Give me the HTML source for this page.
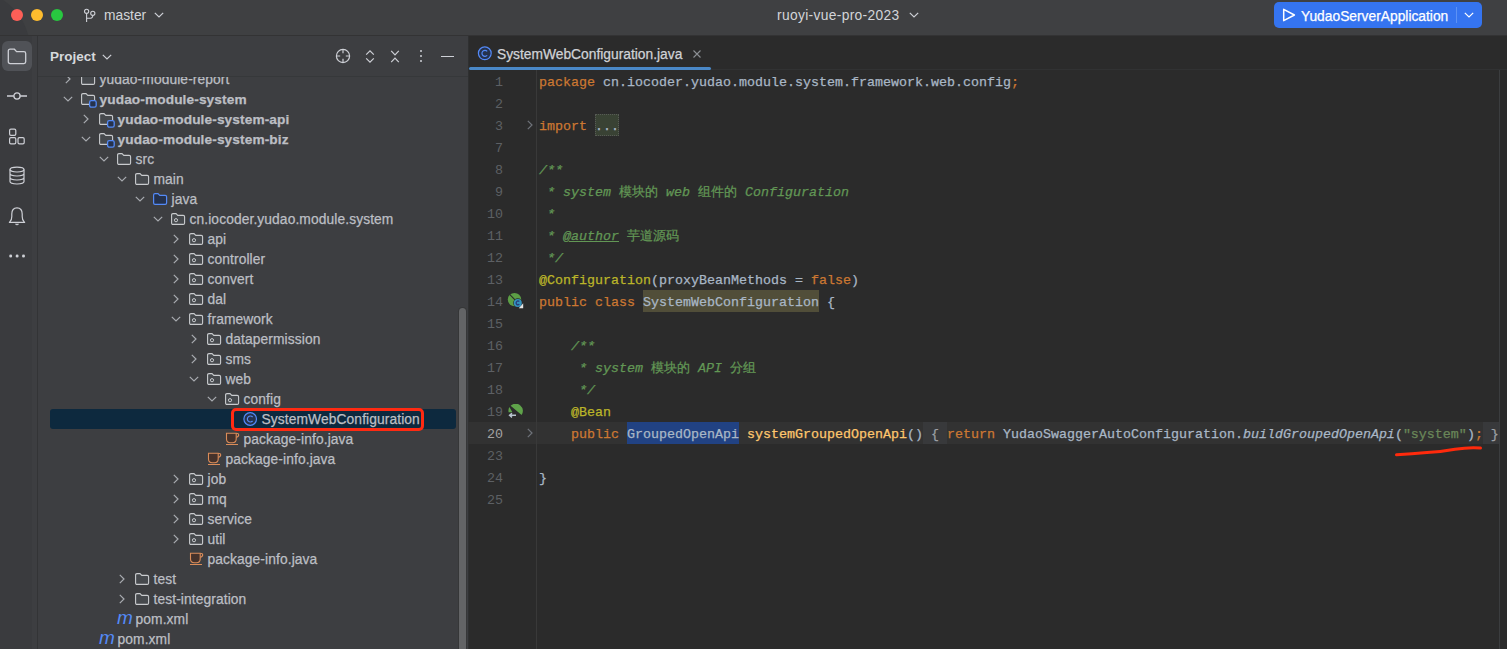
<!DOCTYPE html>
<html><head><meta charset="utf-8">
<style>
*{margin:0;padding:0;box-sizing:border-box}
html,body{width:1507px;height:649px;overflow:hidden;background:#2b2b2b}
body{position:relative;font-family:"Liberation Sans",sans-serif}
.abs{position:absolute}
.ui{-webkit-text-stroke:0.25px}
#title{left:0;top:0;width:1507px;height:35px;background:#3f4042}
#tline{left:0;top:35px;width:1507px;height:1px;background:#333334}
#strip{left:0;top:36px;width:37px;height:613px;background:#3a3b3e}
#strip2{left:32px;top:36px;width:5px;height:613px;background:#3d3e41}
#sline{left:37px;top:36px;width:1px;height:613px;background:#333436}
#panel{left:38px;top:36px;width:430px;height:613px;background:#3d3e41}
#phline{left:38px;top:76px;width:430px;height:1px;background:#36383a}
#pline{left:468px;top:36px;width:1px;height:613px;background:#2f3031}
#editor{left:468px;top:36px;width:1039px;height:613px;background:#2b2b2b}
#treeclip{left:38px;top:77px;width:429px;height:572px;overflow:hidden}
#treein{position:absolute;left:-38px;top:-77px;width:1507px;height:649px}
.row{position:absolute;height:20px;line-height:20px;font-size:13.8px;color:#bcbec4;white-space:nowrap;letter-spacing:0.1px;-webkit-text-stroke:0.25px #bcbec4}
.code{position:absolute;left:539px;font-family:"Liberation Mono",monospace;font-size:13.33px;color:#a9b7c6;white-space:pre;height:22px;line-height:22px;-webkit-text-stroke:0.25px}
.ln{position:absolute;left:470px;width:33px;text-align:right;font-family:"Liberation Mono",monospace;font-size:13.33px;color:#5d6064;height:22px;line-height:22px}
.ln.cur{color:#a4a3a3}
.kw{color:#cc7832}.cm{color:#629755;font-style:italic}.an{color:#bbb529}.fn{color:#ffc66d}.st{color:#6a8759}
.tag{font-weight:normal;text-decoration:underline}.cjk{font-style:normal}
.bgx{position:absolute;height:22px}
.fb{color:#9da0a5}
#curline{left:468px;top:422px;width:1031px;height:22px;background:#323232}
#gutline{left:536px;top:70px;width:1px;height:579px;background:#393939}
#rline{left:1499px;top:70px;width:1px;height:579px;background:#3b3d3f}
</style></head><body>
<div class="abs" id="title"></div>
<div class="abs" style="left:0;top:0;width:37px;height:35px;overflow:hidden"><div class="abs" style="left:-90px;top:-10px;width:120px;height:120px;border-radius:50%;background:#3a3b3e"></div></div>
<div class="abs" id="tline"></div>
<div class="abs" id="strip"></div>
<div class="abs" id="strip2"></div>
<div class="abs" id="sline"></div>
<div class="abs" id="panel"></div>
<div class="abs" id="phline"></div>
<div class="abs" id="editor"></div>
<div class="abs" id="pline"></div>
<div class="abs" id="curline"></div>
<div class="abs" id="gutline"></div>
<div class="abs" id="rline"></div>
<div class="abs" style="left:711px;top:69px;width:796px;height:1px;background:#313233"></div>
<div class="bgx" style="left:643px;top:290px;width:176px;background:#514e39"></div>
<div class="bgx" style="left:627px;top:422px;width:112px;background:#214283"></div>
<div class="bgx" style="left:923px;top:422px;width:24px;background:#38393b"></div>
<div class="bgx" style="left:1483px;top:422px;width:16px;background:#38393b"></div>
<div class="bgx" style="left:595px;top:114px;width:24px;background:#394234;border:1px dotted #575a55"></div>

<!-- traffic lights -->
<div class="abs" style="left:11.3px;top:9px;width:12px;height:12px;border-radius:50%;background:#fe5f57"></div>
<div class="abs" style="left:31.3px;top:9px;width:12px;height:12px;border-radius:50%;background:#febc2e"></div>
<div class="abs" style="left:51.3px;top:9px;width:12px;height:12px;border-radius:50%;background:#28c840"></div>
<!-- branch icon -->
<svg class="abs" style="left:82px;top:6px" width="16" height="18" viewBox="0 0 16 18">
 <circle cx="4.6" cy="5.3" r="2.1" fill="none" stroke="#ced0d6" stroke-width="1.1"/>
 <circle cx="10.8" cy="7.3" r="2.1" fill="none" stroke="#ced0d6" stroke-width="1.1"/>
 <path d="M4.6 7.4 V16" fill="none" stroke="#ced0d6" stroke-width="1.1"/>
 <path d="M10.8 9.4 Q10.8 12.3 7.5 12.3 H4.6" fill="none" stroke="#ced0d6" stroke-width="1.1"/>
</svg>
<div class="abs" style="left:104px;top:6px;font-size:13.8px;line-height:20px;color:#d3d5d9">master</div>
<svg class="abs" style="left:154px;top:11.0px" width="10" height="8" viewBox="0 0 10 8"><path d="M0.8 1.8 L5 6 L9.2 1.8" fill="none" stroke="#ced0d6" stroke-width="1.2"/></svg>
<div class="abs" style="left:777px;top:6px;font-size:13.8px;letter-spacing:0.33px;line-height:20px;color:#d3d5d9">ruoyi-vue-pro-2023</div>
<svg class="abs" style="left:909px;top:11.0px" width="10" height="8" viewBox="0 0 10 8"><path d="M0.8 1.8 L5 6 L9.2 1.8" fill="none" stroke="#ced0d6" stroke-width="1.2"/></svg>
<!-- run button -->
<div class="abs" style="left:1274px;top:2px;width:208px;height:26px;border-radius:5px;background:#3574f0"></div>
<svg class="abs" style="left:1281px;top:7px" width="16" height="16" viewBox="0 0 16 16"><path d="M2.7 2.3 L13.4 8 L2.7 13.7 Z" fill="none" stroke="#ffffff" stroke-width="1.5" stroke-linejoin="round"/></svg>
<div class="abs ui" style="left:1301px;top:6.5px;font-size:13.8px;line-height:20px;color:#ffffff">YudaoServerApplication</div>
<div class="abs" style="left:1456px;top:7px;width:1px;height:16px;background:#5d92f5"></div>
<svg class="abs" style="left:1463.5px;top:11.0px" width="10" height="8" viewBox="0 0 10 8"><path d="M0.8 1.8 L5 6 L9.2 1.8" fill="none" stroke="#ffffff" stroke-width="1.2"/></svg>

<!-- left strip -->
<div class="abs" style="left:2px;top:41px;width:30px;height:30px;border-radius:6px;background:#505257"></div>
<svg class="abs" style="left:7px;top:48px" width="20" height="17" viewBox="0 0 20 17"><path d="M1.3 3 Q1.3 1.2 3.1 1.2 H7.4 L9.6 3.6 H16.9 Q18.7 3.6 18.7 5.4 V13.8 Q18.7 15.6 16.9 15.6 H3.1 Q1.3 15.6 1.3 13.8 Z" fill="none" stroke="#ced0d6" stroke-width="1.3"/></svg>
<svg class="abs" style="left:6px;top:90px" width="22" height="12" viewBox="0 0 22 12"><circle cx="11" cy="6" r="3.1" fill="none" stroke="#ced0d6" stroke-width="1.3"/><path d="M1 6 H7.9 M14.1 6 H21" stroke="#ced0d6" stroke-width="1.3"/></svg>
<svg class="abs" style="left:8px;top:128px" width="18" height="18" viewBox="0 0 18 18"><rect x="1.6" y="1.2" width="6.2" height="6.2" rx="1.3" fill="none" stroke="#ced0d6" stroke-width="1.2"/><rect x="1.6" y="9.6" width="6.2" height="6.2" rx="1.3" fill="none" stroke="#ced0d6" stroke-width="1.2"/><rect x="10" y="9.6" width="6.2" height="6.2" rx="1.3" fill="none" stroke="#ced0d6" stroke-width="1.2"/></svg>
<svg class="abs" style="left:8px;top:166px" width="18" height="20" viewBox="0 0 18 20"><ellipse cx="9" cy="3.6" rx="7" ry="2.4" fill="none" stroke="#ced0d6" stroke-width="1.2"/><path d="M2 3.6 V15.6 Q2 18 9 18 Q16 18 16 15.6 V3.6 M2 7.6 Q2 10 9 10 Q16 10 16 7.6 M2 11.6 Q2 14 9 14 Q16 14 16 11.6" fill="none" stroke="#ced0d6" stroke-width="1.2"/></svg>
<svg class="abs" style="left:8px;top:206px" width="18" height="20" viewBox="0 0 18 20"><path d="M1.4 16.4 H16.6 L16 15.6 Q14.2 13.8 14.2 10.5 V8 Q14.2 1.8 9 1.8 Q3.8 1.8 3.8 8 V10.5 Q3.8 13.8 2 15.6 Z" fill="none" stroke="#ced0d6" stroke-width="1.2" stroke-linejoin="round"/><path d="M7.5 18.2 Q9 19.6 10.5 18.2 Z" fill="#ced0d6" stroke="#ced0d6" stroke-width="0.8"/></svg>
<svg class="abs" style="left:0;top:250px" width="36" height="12" viewBox="0 0 36 12"><circle cx="10.7" cy="6.1" r="1.5" fill="#ced0d6"/><circle cx="17.1" cy="6.1" r="1.5" fill="#ced0d6"/><circle cx="23.5" cy="6.1" r="1.5" fill="#ced0d6"/></svg>

<!-- panel header -->
<div class="abs" style="left:50px;top:47px;font-size:13.5px;line-height:20px;font-weight:bold;color:#d6d8dc">Project</div>
<svg class="abs" style="left:102px;top:52.5px" width="10" height="8" viewBox="0 0 10 8"><path d="M0.8 1.8 L5 6 L9.2 1.8" fill="none" stroke="#ced0d6" stroke-width="1.2"/></svg>
<svg class="abs" style="left:334px;top:47px" width="18" height="18" viewBox="0 0 18 18"><circle cx="9" cy="9" r="6.6" fill="none" stroke="#ced0d6" stroke-width="1.2"/><path d="M9 2.4 V6.2 M9 11.8 V15.6 M2.4 9 H6.2 M11.8 9 H15.6" stroke="#ced0d6" stroke-width="1.2"/></svg>
<svg class="abs" style="left:364.5px;top:48.8px" width="10" height="15" viewBox="0 0 10 15"><path d="M1.2 5.6 L5 1.8 L8.8 5.6 M1.2 9.4 L5 13.2 L8.8 9.4" fill="none" stroke="#ced0d6" stroke-width="1.2"/></svg>
<svg class="abs" style="left:390px;top:48.6px" width="10" height="15" viewBox="0 0 10 15"><path d="M1.2 1.8 L5 5.8 L8.8 1.8 M1.2 13.2 L5 9.2 L8.8 13.2" fill="none" stroke="#ced0d6" stroke-width="1.2"/></svg>
<div class="abs" style="left:420px;top:50px;width:2.2px;height:2.2px;border-radius:50%;background:#ced0d6"></div>
<div class="abs" style="left:420px;top:55px;width:2.2px;height:2.2px;border-radius:50%;background:#ced0d6"></div>
<div class="abs" style="left:420px;top:60px;width:2.2px;height:2.2px;border-radius:50%;background:#ced0d6"></div>
<div class="abs" style="left:440.5px;top:55.5px;width:13px;height:1.2px;background:#ced0d6"></div>

<div class="abs" id="treeclip"><div id="treein">
<div class="abs" style="left:50px;top:409px;width:406px;height:20px;border-radius:3px;background:#0d293e"></div>
<svg class="abs" style="left:63.5px;top:74px" width="8" height="10" viewBox="0 0 8 10"><path d="M1.8 0.8 L6 5 L1.8 9.2" fill="none" stroke="#a8abb0" stroke-width="1.2"/></svg>
<svg class="abs" style="left:81px;top:73px" width="16" height="16" viewBox="0 0 16 16"><path d="M0.6 2 Q0.6 0.6 2 0.6 H5 L6.8 2.4 H12.2 Q13.6 2.4 13.6 3.8 V10 Q13.6 11.4 12.2 11.4 H2 Q0.6 11.4 0.6 10 Z" fill="#46494d" stroke="#c9cbce" stroke-width="1.1"/></svg>
<div class="row" style="left:99.5px;top:70px;font-weight:normal;font-size:13.8px">yudao-module-report</div>
<svg class="abs" style="left:62.5px;top:94.5px" width="10" height="8" viewBox="0 0 10 8"><path d="M0.8 1.8 L5 6 L9.2 1.8" fill="none" stroke="#a8abb0" stroke-width="1.2"/></svg>
<svg class="abs" style="left:81px;top:93px" width="16" height="16" viewBox="0 0 16 16"><path d="M0.6 2 Q0.6 0.6 2 0.6 H5 L6.8 2.4 H12.2 Q13.6 2.4 13.6 3.8 V10 Q13.6 11.4 12.2 11.4 H2 Q0.6 11.4 0.6 10 Z" fill="#46494d" stroke="#c9cbce" stroke-width="1.1"/><rect x="8.6" y="7.6" width="6.6" height="6.6" rx="1.7" fill="#25324d" stroke="#548af7" stroke-width="1.3"/></svg>
<div class="row" style="left:99.5px;top:90px;font-weight:bold;font-size:13.7px">yudao-module-system</div>
<svg class="abs" style="left:81.5px;top:114px" width="8" height="10" viewBox="0 0 8 10"><path d="M1.8 0.8 L6 5 L1.8 9.2" fill="none" stroke="#a8abb0" stroke-width="1.2"/></svg>
<svg class="abs" style="left:99px;top:113px" width="16" height="16" viewBox="0 0 16 16"><path d="M0.6 2 Q0.6 0.6 2 0.6 H5 L6.8 2.4 H12.2 Q13.6 2.4 13.6 3.8 V10 Q13.6 11.4 12.2 11.4 H2 Q0.6 11.4 0.6 10 Z" fill="#46494d" stroke="#c9cbce" stroke-width="1.1"/><rect x="8.6" y="7.6" width="6.6" height="6.6" rx="1.7" fill="#25324d" stroke="#548af7" stroke-width="1.3"/></svg>
<div class="row" style="left:117.5px;top:110px;font-weight:bold;font-size:13.7px">yudao-module-system-api</div>
<svg class="abs" style="left:80.5px;top:134.5px" width="10" height="8" viewBox="0 0 10 8"><path d="M0.8 1.8 L5 6 L9.2 1.8" fill="none" stroke="#a8abb0" stroke-width="1.2"/></svg>
<svg class="abs" style="left:99px;top:133px" width="16" height="16" viewBox="0 0 16 16"><path d="M0.6 2 Q0.6 0.6 2 0.6 H5 L6.8 2.4 H12.2 Q13.6 2.4 13.6 3.8 V10 Q13.6 11.4 12.2 11.4 H2 Q0.6 11.4 0.6 10 Z" fill="#46494d" stroke="#c9cbce" stroke-width="1.1"/><rect x="8.6" y="7.6" width="6.6" height="6.6" rx="1.7" fill="#25324d" stroke="#548af7" stroke-width="1.3"/></svg>
<div class="row" style="left:117.5px;top:130px;font-weight:bold;font-size:13.7px">yudao-module-system-biz</div>
<svg class="abs" style="left:98.5px;top:154.5px" width="10" height="8" viewBox="0 0 10 8"><path d="M0.8 1.8 L5 6 L9.2 1.8" fill="none" stroke="#a8abb0" stroke-width="1.2"/></svg>
<svg class="abs" style="left:117px;top:153px" width="16" height="16" viewBox="0 0 16 16"><path d="M0.6 2 Q0.6 0.6 2 0.6 H5 L6.8 2.4 H12.2 Q13.6 2.4 13.6 3.8 V10 Q13.6 11.4 12.2 11.4 H2 Q0.6 11.4 0.6 10 Z" fill="#46494d" stroke="#c9cbce" stroke-width="1.1"/></svg>
<div class="row" style="left:135.5px;top:150px;font-weight:normal;font-size:13.8px">src</div>
<svg class="abs" style="left:116.5px;top:174.5px" width="10" height="8" viewBox="0 0 10 8"><path d="M0.8 1.8 L5 6 L9.2 1.8" fill="none" stroke="#a8abb0" stroke-width="1.2"/></svg>
<svg class="abs" style="left:135px;top:173px" width="16" height="16" viewBox="0 0 16 16"><path d="M0.6 2 Q0.6 0.6 2 0.6 H5 L6.8 2.4 H12.2 Q13.6 2.4 13.6 3.8 V10 Q13.6 11.4 12.2 11.4 H2 Q0.6 11.4 0.6 10 Z" fill="#46494d" stroke="#c9cbce" stroke-width="1.1"/></svg>
<div class="row" style="left:153.5px;top:170px;font-weight:normal;font-size:13.8px">main</div>
<svg class="abs" style="left:134.5px;top:194.5px" width="10" height="8" viewBox="0 0 10 8"><path d="M0.8 1.8 L5 6 L9.2 1.8" fill="none" stroke="#a8abb0" stroke-width="1.2"/></svg>
<svg class="abs" style="left:153px;top:193px" width="16" height="16" viewBox="0 0 16 16"><path d="M0.6 2 Q0.6 0.6 2 0.6 H5 L6.8 2.4 H12.2 Q13.6 2.4 13.6 3.8 V10 Q13.6 11.4 12.2 11.4 H2 Q0.6 11.4 0.6 10 Z" fill="#25324d" stroke="#548af7" stroke-width="1.2"/></svg>
<div class="row" style="left:171.5px;top:190px;font-weight:normal;font-size:13.8px">java</div>
<svg class="abs" style="left:152.5px;top:214.5px" width="10" height="8" viewBox="0 0 10 8"><path d="M0.8 1.8 L5 6 L9.2 1.8" fill="none" stroke="#a8abb0" stroke-width="1.2"/></svg>
<svg class="abs" style="left:171px;top:213px" width="16" height="16" viewBox="0 0 16 16"><path d="M0.6 2 Q0.6 0.6 2 0.6 H5 L6.8 2.4 H12.2 Q13.6 2.4 13.6 3.8 V10 Q13.6 11.4 12.2 11.4 H2 Q0.6 11.4 0.6 10 Z" fill="#46494d" stroke="#c9cbce" stroke-width="1.1"/><circle cx="5" cy="7.2" r="1.6" fill="none" stroke="#c9cbce" stroke-width="1"/></svg>
<div class="row" style="left:189.5px;top:210px;font-weight:normal;font-size:13.8px">cn.iocoder.yudao.module.system</div>
<svg class="abs" style="left:171.5px;top:234px" width="8" height="10" viewBox="0 0 8 10"><path d="M1.8 0.8 L6 5 L1.8 9.2" fill="none" stroke="#a8abb0" stroke-width="1.2"/></svg>
<svg class="abs" style="left:189px;top:233px" width="16" height="16" viewBox="0 0 16 16"><path d="M0.6 2 Q0.6 0.6 2 0.6 H5 L6.8 2.4 H12.2 Q13.6 2.4 13.6 3.8 V10 Q13.6 11.4 12.2 11.4 H2 Q0.6 11.4 0.6 10 Z" fill="#46494d" stroke="#c9cbce" stroke-width="1.1"/><circle cx="5" cy="7.2" r="1.6" fill="none" stroke="#c9cbce" stroke-width="1"/></svg>
<div class="row" style="left:207.5px;top:230px;font-weight:normal;font-size:13.8px">api</div>
<svg class="abs" style="left:171.5px;top:254px" width="8" height="10" viewBox="0 0 8 10"><path d="M1.8 0.8 L6 5 L1.8 9.2" fill="none" stroke="#a8abb0" stroke-width="1.2"/></svg>
<svg class="abs" style="left:189px;top:253px" width="16" height="16" viewBox="0 0 16 16"><path d="M0.6 2 Q0.6 0.6 2 0.6 H5 L6.8 2.4 H12.2 Q13.6 2.4 13.6 3.8 V10 Q13.6 11.4 12.2 11.4 H2 Q0.6 11.4 0.6 10 Z" fill="#46494d" stroke="#c9cbce" stroke-width="1.1"/><circle cx="5" cy="7.2" r="1.6" fill="none" stroke="#c9cbce" stroke-width="1"/></svg>
<div class="row" style="left:207.5px;top:250px;font-weight:normal;font-size:13.8px">controller</div>
<svg class="abs" style="left:171.5px;top:274px" width="8" height="10" viewBox="0 0 8 10"><path d="M1.8 0.8 L6 5 L1.8 9.2" fill="none" stroke="#a8abb0" stroke-width="1.2"/></svg>
<svg class="abs" style="left:189px;top:273px" width="16" height="16" viewBox="0 0 16 16"><path d="M0.6 2 Q0.6 0.6 2 0.6 H5 L6.8 2.4 H12.2 Q13.6 2.4 13.6 3.8 V10 Q13.6 11.4 12.2 11.4 H2 Q0.6 11.4 0.6 10 Z" fill="#46494d" stroke="#c9cbce" stroke-width="1.1"/><circle cx="5" cy="7.2" r="1.6" fill="none" stroke="#c9cbce" stroke-width="1"/></svg>
<div class="row" style="left:207.5px;top:270px;font-weight:normal;font-size:13.8px">convert</div>
<svg class="abs" style="left:171.5px;top:294px" width="8" height="10" viewBox="0 0 8 10"><path d="M1.8 0.8 L6 5 L1.8 9.2" fill="none" stroke="#a8abb0" stroke-width="1.2"/></svg>
<svg class="abs" style="left:189px;top:293px" width="16" height="16" viewBox="0 0 16 16"><path d="M0.6 2 Q0.6 0.6 2 0.6 H5 L6.8 2.4 H12.2 Q13.6 2.4 13.6 3.8 V10 Q13.6 11.4 12.2 11.4 H2 Q0.6 11.4 0.6 10 Z" fill="#46494d" stroke="#c9cbce" stroke-width="1.1"/><circle cx="5" cy="7.2" r="1.6" fill="none" stroke="#c9cbce" stroke-width="1"/></svg>
<div class="row" style="left:207.5px;top:290px;font-weight:normal;font-size:13.8px">dal</div>
<svg class="abs" style="left:170.5px;top:314.5px" width="10" height="8" viewBox="0 0 10 8"><path d="M0.8 1.8 L5 6 L9.2 1.8" fill="none" stroke="#a8abb0" stroke-width="1.2"/></svg>
<svg class="abs" style="left:189px;top:313px" width="16" height="16" viewBox="0 0 16 16"><path d="M0.6 2 Q0.6 0.6 2 0.6 H5 L6.8 2.4 H12.2 Q13.6 2.4 13.6 3.8 V10 Q13.6 11.4 12.2 11.4 H2 Q0.6 11.4 0.6 10 Z" fill="#46494d" stroke="#c9cbce" stroke-width="1.1"/><circle cx="5" cy="7.2" r="1.6" fill="none" stroke="#c9cbce" stroke-width="1"/></svg>
<div class="row" style="left:207.5px;top:310px;font-weight:normal;font-size:13.8px">framework</div>
<svg class="abs" style="left:189.5px;top:334px" width="8" height="10" viewBox="0 0 8 10"><path d="M1.8 0.8 L6 5 L1.8 9.2" fill="none" stroke="#a8abb0" stroke-width="1.2"/></svg>
<svg class="abs" style="left:207px;top:333px" width="16" height="16" viewBox="0 0 16 16"><path d="M0.6 2 Q0.6 0.6 2 0.6 H5 L6.8 2.4 H12.2 Q13.6 2.4 13.6 3.8 V10 Q13.6 11.4 12.2 11.4 H2 Q0.6 11.4 0.6 10 Z" fill="#46494d" stroke="#c9cbce" stroke-width="1.1"/><circle cx="5" cy="7.2" r="1.6" fill="none" stroke="#c9cbce" stroke-width="1"/></svg>
<div class="row" style="left:225.5px;top:330px;font-weight:normal;font-size:13.8px">datapermission</div>
<svg class="abs" style="left:189.5px;top:354px" width="8" height="10" viewBox="0 0 8 10"><path d="M1.8 0.8 L6 5 L1.8 9.2" fill="none" stroke="#a8abb0" stroke-width="1.2"/></svg>
<svg class="abs" style="left:207px;top:353px" width="16" height="16" viewBox="0 0 16 16"><path d="M0.6 2 Q0.6 0.6 2 0.6 H5 L6.8 2.4 H12.2 Q13.6 2.4 13.6 3.8 V10 Q13.6 11.4 12.2 11.4 H2 Q0.6 11.4 0.6 10 Z" fill="#46494d" stroke="#c9cbce" stroke-width="1.1"/><circle cx="5" cy="7.2" r="1.6" fill="none" stroke="#c9cbce" stroke-width="1"/></svg>
<div class="row" style="left:225.5px;top:350px;font-weight:normal;font-size:13.8px">sms</div>
<svg class="abs" style="left:188.5px;top:374.5px" width="10" height="8" viewBox="0 0 10 8"><path d="M0.8 1.8 L5 6 L9.2 1.8" fill="none" stroke="#a8abb0" stroke-width="1.2"/></svg>
<svg class="abs" style="left:207px;top:373px" width="16" height="16" viewBox="0 0 16 16"><path d="M0.6 2 Q0.6 0.6 2 0.6 H5 L6.8 2.4 H12.2 Q13.6 2.4 13.6 3.8 V10 Q13.6 11.4 12.2 11.4 H2 Q0.6 11.4 0.6 10 Z" fill="#46494d" stroke="#c9cbce" stroke-width="1.1"/><circle cx="5" cy="7.2" r="1.6" fill="none" stroke="#c9cbce" stroke-width="1"/></svg>
<div class="row" style="left:225.5px;top:370px;font-weight:normal;font-size:13.8px">web</div>
<svg class="abs" style="left:206.5px;top:394.5px" width="10" height="8" viewBox="0 0 10 8"><path d="M0.8 1.8 L5 6 L9.2 1.8" fill="none" stroke="#a8abb0" stroke-width="1.2"/></svg>
<svg class="abs" style="left:225px;top:393px" width="16" height="16" viewBox="0 0 16 16"><path d="M0.6 2 Q0.6 0.6 2 0.6 H5 L6.8 2.4 H12.2 Q13.6 2.4 13.6 3.8 V10 Q13.6 11.4 12.2 11.4 H2 Q0.6 11.4 0.6 10 Z" fill="#46494d" stroke="#c9cbce" stroke-width="1.1"/><circle cx="5" cy="7.2" r="1.6" fill="none" stroke="#c9cbce" stroke-width="1"/></svg>
<div class="row" style="left:243.5px;top:390px;font-weight:normal;font-size:13.8px">config</div>
<svg class="abs" style="left:243px;top:412px" width="16" height="16" viewBox="0 0 16 16"><circle cx="7.2" cy="7" r="6.3" fill="#25324d" stroke="#548af7" stroke-width="1.2"/><path d="M9.6 5 A3 3 0 1 0 9.6 9" fill="none" stroke="#548af7" stroke-width="1.2"/></svg>
<div class="row" style="left:261.5px;top:410px;font-weight:normal;font-size:13.8px">SystemWebConfiguration</div>
<svg class="abs" style="left:225px;top:432px" width="16" height="16" viewBox="0 0 16 16"><path d="M1.5 1.3 H11.2 V7 Q11.2 10.7 7.4 10.7 H5.3 Q1.5 10.7 1.5 7 Z" fill="#45322b" stroke="#db8c59" stroke-width="1.1"/><path d="M11.2 1.5 H12.5 Q13.7 1.5 13.7 2.8 Q13.7 5 11.2 5.3" fill="none" stroke="#db8c59" stroke-width="1.1"/><path d="M1 12.5 H13" stroke="#db8c59" stroke-width="1"/></svg>
<div class="row" style="left:243.5px;top:430px;font-weight:normal;font-size:13.8px">package-info.java</div>
<svg class="abs" style="left:207px;top:452px" width="16" height="16" viewBox="0 0 16 16"><path d="M1.5 1.3 H11.2 V7 Q11.2 10.7 7.4 10.7 H5.3 Q1.5 10.7 1.5 7 Z" fill="#45322b" stroke="#db8c59" stroke-width="1.1"/><path d="M11.2 1.5 H12.5 Q13.7 1.5 13.7 2.8 Q13.7 5 11.2 5.3" fill="none" stroke="#db8c59" stroke-width="1.1"/><path d="M1 12.5 H13" stroke="#db8c59" stroke-width="1"/></svg>
<div class="row" style="left:225.5px;top:450px;font-weight:normal;font-size:13.8px">package-info.java</div>
<svg class="abs" style="left:171.5px;top:474px" width="8" height="10" viewBox="0 0 8 10"><path d="M1.8 0.8 L6 5 L1.8 9.2" fill="none" stroke="#a8abb0" stroke-width="1.2"/></svg>
<svg class="abs" style="left:189px;top:473px" width="16" height="16" viewBox="0 0 16 16"><path d="M0.6 2 Q0.6 0.6 2 0.6 H5 L6.8 2.4 H12.2 Q13.6 2.4 13.6 3.8 V10 Q13.6 11.4 12.2 11.4 H2 Q0.6 11.4 0.6 10 Z" fill="#46494d" stroke="#c9cbce" stroke-width="1.1"/><circle cx="5" cy="7.2" r="1.6" fill="none" stroke="#c9cbce" stroke-width="1"/></svg>
<div class="row" style="left:207.5px;top:470px;font-weight:normal;font-size:13.8px">job</div>
<svg class="abs" style="left:171.5px;top:494px" width="8" height="10" viewBox="0 0 8 10"><path d="M1.8 0.8 L6 5 L1.8 9.2" fill="none" stroke="#a8abb0" stroke-width="1.2"/></svg>
<svg class="abs" style="left:189px;top:493px" width="16" height="16" viewBox="0 0 16 16"><path d="M0.6 2 Q0.6 0.6 2 0.6 H5 L6.8 2.4 H12.2 Q13.6 2.4 13.6 3.8 V10 Q13.6 11.4 12.2 11.4 H2 Q0.6 11.4 0.6 10 Z" fill="#46494d" stroke="#c9cbce" stroke-width="1.1"/><circle cx="5" cy="7.2" r="1.6" fill="none" stroke="#c9cbce" stroke-width="1"/></svg>
<div class="row" style="left:207.5px;top:490px;font-weight:normal;font-size:13.8px">mq</div>
<svg class="abs" style="left:171.5px;top:514px" width="8" height="10" viewBox="0 0 8 10"><path d="M1.8 0.8 L6 5 L1.8 9.2" fill="none" stroke="#a8abb0" stroke-width="1.2"/></svg>
<svg class="abs" style="left:189px;top:513px" width="16" height="16" viewBox="0 0 16 16"><path d="M0.6 2 Q0.6 0.6 2 0.6 H5 L6.8 2.4 H12.2 Q13.6 2.4 13.6 3.8 V10 Q13.6 11.4 12.2 11.4 H2 Q0.6 11.4 0.6 10 Z" fill="#46494d" stroke="#c9cbce" stroke-width="1.1"/><circle cx="5" cy="7.2" r="1.6" fill="none" stroke="#c9cbce" stroke-width="1"/></svg>
<div class="row" style="left:207.5px;top:510px;font-weight:normal;font-size:13.8px">service</div>
<svg class="abs" style="left:171.5px;top:534px" width="8" height="10" viewBox="0 0 8 10"><path d="M1.8 0.8 L6 5 L1.8 9.2" fill="none" stroke="#a8abb0" stroke-width="1.2"/></svg>
<svg class="abs" style="left:189px;top:533px" width="16" height="16" viewBox="0 0 16 16"><path d="M0.6 2 Q0.6 0.6 2 0.6 H5 L6.8 2.4 H12.2 Q13.6 2.4 13.6 3.8 V10 Q13.6 11.4 12.2 11.4 H2 Q0.6 11.4 0.6 10 Z" fill="#46494d" stroke="#c9cbce" stroke-width="1.1"/><circle cx="5" cy="7.2" r="1.6" fill="none" stroke="#c9cbce" stroke-width="1"/></svg>
<div class="row" style="left:207.5px;top:530px;font-weight:normal;font-size:13.8px">util</div>
<svg class="abs" style="left:189px;top:552px" width="16" height="16" viewBox="0 0 16 16"><path d="M1.5 1.3 H11.2 V7 Q11.2 10.7 7.4 10.7 H5.3 Q1.5 10.7 1.5 7 Z" fill="#45322b" stroke="#db8c59" stroke-width="1.1"/><path d="M11.2 1.5 H12.5 Q13.7 1.5 13.7 2.8 Q13.7 5 11.2 5.3" fill="none" stroke="#db8c59" stroke-width="1.1"/><path d="M1 12.5 H13" stroke="#db8c59" stroke-width="1"/></svg>
<div class="row" style="left:207.5px;top:550px;font-weight:normal;font-size:13.8px">package-info.java</div>
<svg class="abs" style="left:117.5px;top:574px" width="8" height="10" viewBox="0 0 8 10"><path d="M1.8 0.8 L6 5 L1.8 9.2" fill="none" stroke="#a8abb0" stroke-width="1.2"/></svg>
<svg class="abs" style="left:135px;top:573px" width="16" height="16" viewBox="0 0 16 16"><path d="M0.6 2 Q0.6 0.6 2 0.6 H5 L6.8 2.4 H12.2 Q13.6 2.4 13.6 3.8 V10 Q13.6 11.4 12.2 11.4 H2 Q0.6 11.4 0.6 10 Z" fill="#46494d" stroke="#c9cbce" stroke-width="1.1"/></svg>
<div class="row" style="left:153.5px;top:570px;font-weight:normal;font-size:13.8px">test</div>
<svg class="abs" style="left:117.5px;top:594px" width="8" height="10" viewBox="0 0 8 10"><path d="M1.8 0.8 L6 5 L1.8 9.2" fill="none" stroke="#a8abb0" stroke-width="1.2"/></svg>
<svg class="abs" style="left:135px;top:593px" width="16" height="16" viewBox="0 0 16 16"><path d="M0.6 2 Q0.6 0.6 2 0.6 H5 L6.8 2.4 H12.2 Q13.6 2.4 13.6 3.8 V10 Q13.6 11.4 12.2 11.4 H2 Q0.6 11.4 0.6 10 Z" fill="#46494d" stroke="#c9cbce" stroke-width="1.1"/></svg>
<div class="row" style="left:153.5px;top:590px;font-weight:normal;font-size:13.8px">test-integration</div>
<div class="abs" style="left:117px;top:608px;font:italic 19px/20px 'Liberation Sans',sans-serif;color:#548af7;letter-spacing:-0.5px">m</div>
<div class="row" style="left:135.5px;top:610px;font-weight:normal;font-size:13.8px">pom.xml</div>
<div class="abs" style="left:99px;top:628px;font:italic 19px/20px 'Liberation Sans',sans-serif;color:#548af7;letter-spacing:-0.5px">m</div>
<div class="row" style="left:117.5px;top:630px;font-weight:normal;font-size:13.8px">pom.xml</div>
<div class="abs" style="left:231px;top:408px;width:193px;height:23px;border:3px solid #ff2a12;border-radius:5px"></div>
<div class="abs" style="left:459px;top:308px;width:7px;height:400px;border-radius:3.5px;background:#636466;box-shadow:0 0 0 1px #363738"></div>
</div></div>

<!-- tab -->
<svg class="abs" style="left:477px;top:46px" width="16" height="16" viewBox="0 0 16 16"><circle cx="7.8" cy="7.3" r="6.4" fill="#25324d" stroke="#548af7" stroke-width="1.2"/><path d="M10.2 5.3 A3 3 0 1 0 10.2 9.3" fill="none" stroke="#548af7" stroke-width="1.2"/></svg>
<div class="abs ui" style="left:497px;top:44.5px;font-size:13.8px;line-height:20px;color:#d0d2d6">SystemWebConfiguration.java</div>
<svg class="abs" style="left:692px;top:49px" width="10" height="10" viewBox="0 0 10 10"><path d="M1.5 1.5 L8.5 8.5 M8.5 1.5 L1.5 8.5" stroke="#8c8f94" stroke-width="1.1"/></svg>
<div class="abs" style="left:469px;top:67px;width:242px;height:3px;border-radius:1.5px;background:#4a88c7"></div>

<!-- gutter -->
<svg class="abs" style="left:525.5px;top:120px" width="8" height="10" viewBox="0 0 8 10"><path d="M1.8 0.8 L6 5 L1.8 9.2" fill="none" stroke="#6f737a" stroke-width="1.2"/></svg>
<svg class="abs" style="left:525.5px;top:428px" width="8" height="10" viewBox="0 0 8 10"><path d="M1.8 0.8 L6 5 L1.8 9.2" fill="none" stroke="#6f737a" stroke-width="1.2"/></svg>
<svg class="abs" style="left:507px;top:292px" width="18" height="18" viewBox="0 0 18 18"><circle cx="7.5" cy="7.6" r="6.7" fill="#5c9e45"/><path d="M2.6 2.4 L8 7.8" stroke="#2b2b2b" stroke-width="1.1"/><circle cx="10.8" cy="10.9" r="4.6" fill="#2b2b2b"/><circle cx="10.8" cy="10.9" r="4" fill="#3592bd"/><path d="M12.3 9.5 A1.9 1.9 0 1 0 12.3 12.3" fill="none" stroke="#283a78" stroke-width="1.2"/><path d="M16.2 11.3 V16.2 H11.8 Z" fill="#e6e6e6"/></svg>
<svg class="abs" style="left:507px;top:403.5px" width="16" height="15" viewBox="0 0 16 15"><path d="M3.6 1.8 A7.2 7.2 0 0 1 14.6 11 Z" fill="#5fa34a"/><path d="M2.4 3 A7.2 7.2 0 0 0 1.6 8.2 L5.4 8.2 Z" fill="#5fa34a"/><path d="M9 11.3 H3 M5 9.2 L2.6 11.3 L5 13.4" fill="none" stroke="#b9c4d0" stroke-width="1.5"/></svg>

<div class="ln" style="top:72px">1</div>
<div class="code" style="top:72px"><span class="kw">package</span> cn.iocoder.yudao.module.system.framework.web.config<span class="kw">;</span></div>
<div class="ln" style="top:94px">2</div>
<div class="code" style="top:94px"></div>
<div class="ln" style="top:116px">3</div>
<div class="code" style="top:116px"><span class="kw">import</span> <span class="fold">...</span></div>
<div class="ln" style="top:138px">7</div>
<div class="code" style="top:138px"></div>
<div class="ln" style="top:160px">8</div>
<div class="code" style="top:160px"><span class="cm">/**</span></div>
<div class="ln" style="top:182px">9</div>
<div class="code" style="top:182px"><span class="cm"> * system <span class="cjk">模块的</span> web <span class="cjk">组件的</span> Configuration</span></div>
<div class="ln" style="top:204px">10</div>
<div class="code" style="top:204px"><span class="cm"> *</span></div>
<div class="ln" style="top:226px">11</div>
<div class="code" style="top:226px"><span class="cm"> * <b class="tag">@author</b> <span class="cjk">芋道源码</span></span></div>
<div class="ln" style="top:248px">12</div>
<div class="code" style="top:248px"><span class="cm"> */</span></div>
<div class="ln" style="top:270px">13</div>
<div class="code" style="top:270px"><span class="an">@Configuration</span>(proxyBeanMethods = <span class="kw">false</span>)</div>
<div class="ln" style="top:292px">14</div>
<div class="code" style="top:292px"><span class="kw">public class</span> <span class="hl">SystemWebConfiguration</span> {</div>
<div class="ln" style="top:314px">15</div>
<div class="code" style="top:314px"></div>
<div class="ln" style="top:336px">16</div>
<div class="code" style="top:336px">    <span class="cm">/**</span></div>
<div class="ln" style="top:358px">17</div>
<div class="code" style="top:358px"><span class="cm">     * system <span class="cjk">模块的</span> API <span class="cjk">分组</span></span></div>
<div class="ln" style="top:380px">18</div>
<div class="code" style="top:380px"><span class="cm">     */</span></div>
<div class="ln" style="top:402px">19</div>
<div class="code" style="top:402px">    <span class="an">@Bean</span></div>
<div class="ln cur" style="top:424px">20</div>
<div class="code" style="top:424px">    <span class="kw">public</span> <span class="sel">GroupedOpenApi</span> <span class="fn">systemGroupedOpenApi</span>()<span class="fb"> { </span><span class="kw">return</span> YudaoSwaggerAutoConfiguration.<i>buildGroupedOpenApi</i>(<span class="st">"system"</span>)<span class="kw">;</span><span class="fb"> }</span></div>
<div class="ln" style="top:446px">23</div>
<div class="code" style="top:446px"></div>
<div class="ln" style="top:468px">24</div>
<div class="code" style="top:468px">}</div>
<div class="ln" style="top:490px">25</div>
<div class="code" style="top:490px"></div>
<svg class="abs" style="left:1390px;top:443px" width="96" height="16" viewBox="0 0 96 16"><path d="M6.5 11.8 Q22 10.8 37 9.6 Q52 8.8 65 6.3 Q79 4 90.5 5" fill="none" stroke="#ff2a0c" stroke-width="3" stroke-linecap="round"/></svg>
</body></html>
